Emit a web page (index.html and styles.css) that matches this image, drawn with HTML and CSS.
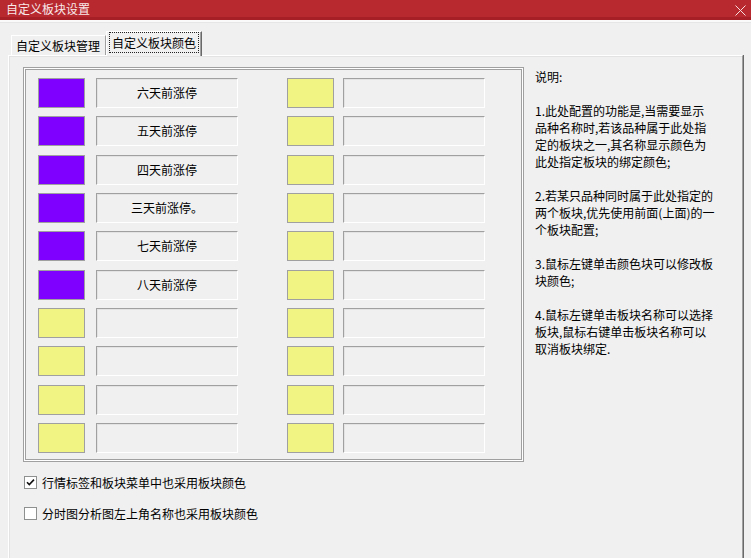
FILE: index.html
```html
<!DOCTYPE html>
<html lang="zh-CN">
<head>
<meta charset="utf-8">
<title>自定义板块设置</title>
<link rel="stylesheet" href="styles.css">
</head>
<body>
<div class="window">
  <div class="titlebar">
    <span class="title">自定义板块设置</span>
    <svg class="close" width="11" height="11" viewBox="0 0 11 11"><path d="M0.5 0.5L10.5 10.5M10.5 0.5L0.5 10.5" stroke="#f6dede" stroke-width="1" fill="none"/></svg>
  </div>
  <div class="strip"></div>
  <div class="tabstrip">
    <div class="tab">自定义板块管理</div>
    <div class="tab active"><span class="focus">自定义板块颜色</span></div>
  </div>
  <div class="panel">
    <div class="content">
      <div class="group">
        <div class="rows">
          <div class="row"><div class="swatch purple"></div><div class="name">六天前涨停</div><div class="swatch yellow col2"></div><div class="name n2"></div></div>
          <div class="row"><div class="swatch purple"></div><div class="name">五天前涨停</div><div class="swatch yellow col2"></div><div class="name n2"></div></div>
          <div class="row"><div class="swatch purple"></div><div class="name">四天前涨停</div><div class="swatch yellow col2"></div><div class="name n2"></div></div>
          <div class="row"><div class="swatch purple"></div><div class="name">三天前涨停。</div><div class="swatch yellow col2"></div><div class="name n2"></div></div>
          <div class="row"><div class="swatch purple"></div><div class="name">七天前涨停</div><div class="swatch yellow col2"></div><div class="name n2"></div></div>
          <div class="row"><div class="swatch purple"></div><div class="name">八天前涨停</div><div class="swatch yellow col2"></div><div class="name n2"></div></div>
          <div class="row"><div class="swatch yellow"></div><div class="name"></div><div class="swatch yellow col2"></div><div class="name n2"></div></div>
          <div class="row"><div class="swatch yellow"></div><div class="name"></div><div class="swatch yellow col2"></div><div class="name n2"></div></div>
          <div class="row"><div class="swatch yellow"></div><div class="name"></div><div class="swatch yellow col2"></div><div class="name n2"></div></div>
          <div class="row"><div class="swatch yellow"></div><div class="name"></div><div class="swatch yellow col2"></div><div class="name n2"></div></div>
        </div>
      </div>
      <div class="notes">
        <p>说明:</p>
        <p>1.此处配置的功能是,当需要显示<br>品种名称时,若该品种属于此处指<br>定的板块之一,其名称显示颜色为<br>此处指定板块的绑定颜色;</p>
        <p>2.若某只品种同时属于此处指定的<br>两个板块,优先使用前面(上面)的一<br>个板块配置;</p>
        <p>3.鼠标左键单击颜色块可以修改板<br>块颜色;</p>
        <p>4.鼠标左键单击板块名称可以选择<br>板块,鼠标右键单击板块名称可以<br>取消板块绑定.</p>
      </div>
    </div>
    <div class="opts">
      <label class="opt"><span class="cb"><svg width="11" height="11" viewBox="0 0 11 11"><path d="M2 5.2L4.3 7.6L9 2.6" stroke="#111" stroke-width="1.6" fill="none"/></svg></span>行情标签和板块菜单中也采用板块颜色</label>
      <label class="opt"><span class="cb"></span>分时图分析图左上角名称也采用板块颜色</label>
    </div>
  </div>
</div>
</body>
</html>
```

FILE: styles.css
```css
html, body {
  margin: 0;
  padding: 0;
}
body {
  background: #f0f0f0;
  font-family: "Noto Sans CJK SC", "Microsoft YaHei", sans-serif;
  font-size: 12px;
  color: #000;
}
.window {
  width: 751px;
  height: 558px;
  overflow: hidden;
  display: flex;
  flex-direction: column;
}
.titlebar {
  height: 17px;
  background: #b7282f;
  border-bottom: 3px solid #a61e26;
  display: flex;
  align-items: center;
  justify-content: space-between;
  padding: 0 5px 0 6px;
}
.title {
  color: #f9e9e9;
  line-height: 17px;
  font-size: 12px;
}
.close {
  display: block;
  margin-top: 3px;
}
.strip {
  height: 2px;
  background: #fafafa;
  border-bottom: 1px solid #e6e6e6;
}
.tabstrip {
  height: 32px;
  display: flex;
  align-items: flex-end;
  padding-left: 11px;
}
.tab {
  height: 19px;
  line-height: 19px;
  padding: 0 5px 0 4px;
  border-top: 1px solid #ffffff;
  border-left: 1px solid #ffffff;
  border-right: 1px solid #a0a0a0;
  box-shadow: 1px 0 0 #e0e0e0;
  background: #f0f0f0;
  white-space: nowrap;
}
.tab.active {
  height: 24px;
  line-height: 22px;
  margin-bottom: -1px;
  padding: 0 2px 0 2px;
  position: relative;
  z-index: 1;
  border-right: 1px solid #696969;
  box-shadow: inset -1px 0 0 #a0a0a0;
}
.focus {
  display: inline-block;
  line-height: 17px;
  padding: 1px 2px 1px 2px;
  border: 1px dotted #222;
}
.panel {
  flex: 1;
  margin: 0 8px 0 8px;
  border-top: 1px solid #ffffff;
  border-left: 1px solid #ffffff;
  border-right: 1px solid #a0a0a0;
  box-shadow: 1px 0 0 #696969, inset 0 1px 0 #e3e3e3, inset 1px 0 0 #e3e3e3;
  padding: 11px 0 0 14px;
}
.content {
  display: flex;
  align-items: flex-start;
  gap: 11px;
}
.group {
  width: 501px;
  height: 395px;
  box-sizing: border-box;
  border: 1px solid #a0a0a0;
  box-shadow: inset 0 0 0 1px #ffffff, inset 0 0 0 2px #a0a0a0;
  padding: 10px 0 0 14px;
}
.rows {
  display: flex;
  flex-direction: column;
  gap: 8.33px;
}
.row {
  display: flex;
  height: 30px;
}
.swatch {
  width: 47px;
  height: 30px;
  box-sizing: border-box;
  border: 1px solid #a0a0a0;
}
.purple { background: #8000ff; }
.yellow { background: #f1f483; }
.swatch.col2 { margin-left: 49px; }
.name {
  width: 142px;
  height: 30px;
  box-sizing: border-box;
  margin-left: 11px;
  border-top: 1px solid #a0a0a0;
  border-left: 1px solid #a0a0a0;
  border-right: 1px solid #ffffff;
  border-bottom: 1px solid #ffffff;
  box-shadow: inset 1px 1px 0 #e3e3e3;
  text-align: center;
  line-height: 28px;
  white-space: nowrap;
}
.name.n2 { margin-left: 9px; }
.notes {
  padding-top: 1px;
  line-height: 17px;
}
.notes p {
  margin: 0 0 17px 0;
}
.opts {
  margin-top: 12px;
  padding-left: 1px;
  display: flex;
  flex-direction: column;
  gap: 14px;
}
.opt {
  display: flex;
  align-items: center;
  height: 17px;
  line-height: 17px;
  gap: 5px;
}
.cb {
  width: 13px;
  height: 13px;
  box-sizing: border-box;
  border: 1px solid #8e8f8f;
  background: #ffffff;
  display: flex;
  align-items: center;
  justify-content: center;
}
.cb svg { display: block; }
```
